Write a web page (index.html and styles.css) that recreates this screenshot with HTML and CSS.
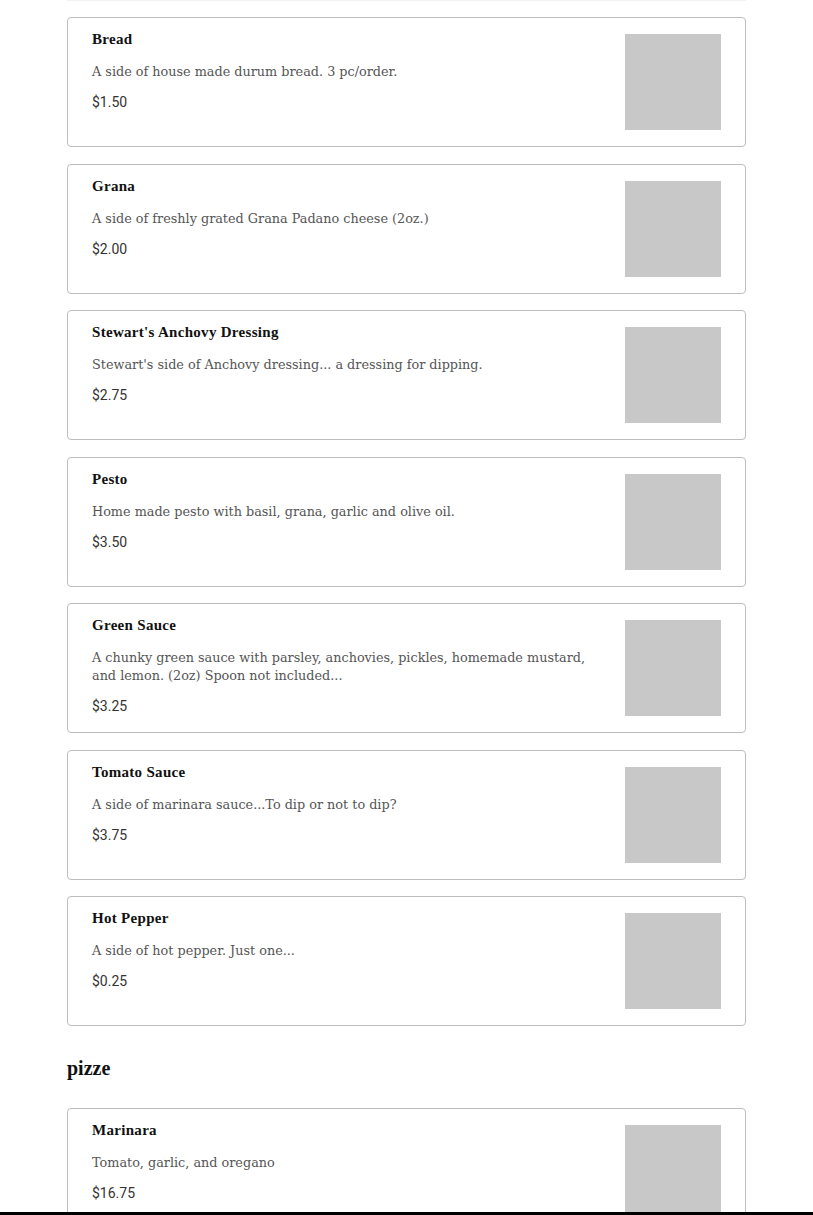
FILE: index.html
```html
<!DOCTYPE html>
<html lang="en">
<head>
<meta charset="utf-8">
<title>Menu</title>
<link rel="stylesheet" href="styles.css">
</head>
<body>
<main class="menu">
  <div class="prev-edge"></div>
  <section class="items">
    <article class="card">
      <div class="info">
        <h3 class="name">Bread</h3>
        <p class="desc">A side of house made durum bread. 3 pc/order.</p>
        <p class="price">$1.50</p>
      </div>
      <div class="thumb"></div>
    </article>
    <article class="card">
      <div class="info">
        <h3 class="name">Grana</h3>
        <p class="desc">A side of freshly grated Grana Padano cheese (2oz.)</p>
        <p class="price">$2.00</p>
      </div>
      <div class="thumb"></div>
    </article>
    <article class="card">
      <div class="info">
        <h3 class="name">Stewart's Anchovy Dressing</h3>
        <p class="desc">Stewart's side of Anchovy dressing... a dressing for dipping.</p>
        <p class="price">$2.75</p>
      </div>
      <div class="thumb"></div>
    </article>
    <article class="card">
      <div class="info">
        <h3 class="name">Pesto</h3>
        <p class="desc">Home made pesto with basil, grana, garlic and olive oil.</p>
        <p class="price">$3.50</p>
      </div>
      <div class="thumb"></div>
    </article>
    <article class="card">
      <div class="info">
        <h3 class="name">Green Sauce</h3>
        <p class="desc">A chunky green sauce with parsley, anchovies, pickles, homemade mustard, and lemon. (2oz) Spoon not included...</p>
        <p class="price">$3.25</p>
      </div>
      <div class="thumb"></div>
    </article>
    <article class="card">
      <div class="info">
        <h3 class="name">Tomato Sauce</h3>
        <p class="desc">A side of marinara sauce...To dip or not to dip?</p>
        <p class="price">$3.75</p>
      </div>
      <div class="thumb"></div>
    </article>
    <article class="card">
      <div class="info">
        <h3 class="name">Hot Pepper</h3>
        <p class="desc">A side of hot pepper. Just one...</p>
        <p class="price">$0.25</p>
      </div>
      <div class="thumb"></div>
    </article>
  </section>
  <h2 class="section-title">pizze</h2>
  <section class="items">
    <article class="card">
      <div class="info">
        <h3 class="name">Marinara</h3>
        <p class="desc">Tomato, garlic, and oregano</p>
        <p class="price">$16.75</p>
      </div>
      <div class="thumb"></div>
    </article>
  </section>
</main>
<div class="bottom-bar"></div>
</body>
</html>
```

FILE: styles.css
```css
* { box-sizing: border-box; }
html, body { margin: 0; padding: 0; background: #fff; }
body { overflow: hidden; height: 1215px; }

.menu {
  width: 679px;
  margin: 0 auto;
}

.prev-edge {
  height: 1px;
  background: #f2f2f2;
}

.items {
  display: flex;
  flex-direction: column;
  gap: 16.5px;
  margin-top: 16px;
}

.card {
  display: flex;
  align-items: flex-start;
  gap: 24px;
  height: 130px;
  padding: 11px 24px 13px;
  border: 1px solid #bdbdbd;
  border-radius: 4px;
  background: #fff;
}

.info {
  flex: 1;
  min-width: 0;
}

.name {
  margin: 0;
  font-family: "Liberation Serif", "DejaVu Serif", serif;
  font-weight: 700;
  font-size: 15px;
  line-height: 20px;
  letter-spacing: 0.3px;
  color: #111;
}

.desc {
  margin: 14px 0 0;
  font-family: "DejaVu Serif", serif;
  font-size: 12.8px;
  line-height: 18px;
  color: #555;
}

.price {
  margin: 12px 0 0;
  font-family: Roboto, "Liberation Sans", sans-serif;
  font-size: 14px;
  line-height: 18px;
  color: #333;
}

.thumb {
  flex: none;
  width: 96px;
  height: 96px;
  margin-top: 5px;
  background: #c8c8c8;
}

.section-title {
  margin: 30px 0 0;
  font-family: "Liberation Serif", "DejaVu Serif", serif;
  font-weight: 700;
  font-size: 20px;
  line-height: 24px;
  color: #111;
}

.section-title + .items { margin-top: 28px; }

.bottom-bar {
  position: fixed;
  left: 0;
  right: 0;
  bottom: 0;
  height: 3px;
  background: #000;
}
```
